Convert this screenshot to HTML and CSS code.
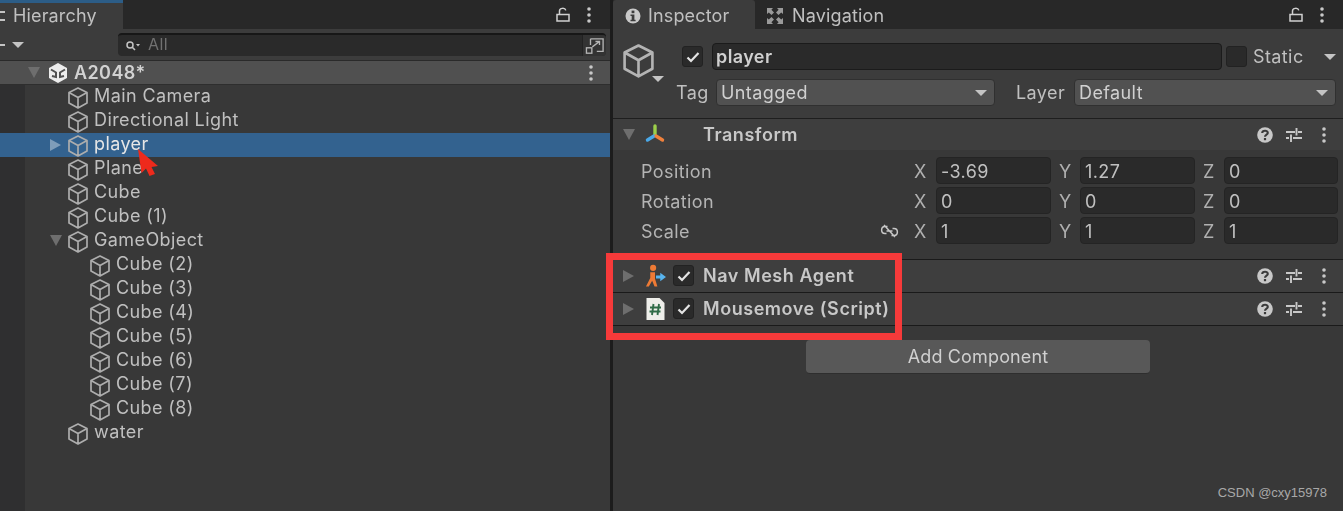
FILE: index.html
```html
<!DOCTYPE html>
<html lang="en">
<head>
  <meta charset="UTF-8" />
  <title>Unity Editor</title>
  <link rel="stylesheet" href="styles.css">
</head>
<body>
  <!-- Shared icons -->
  <svg class="defs" width="0" height="0">
    <symbol id="cube" viewBox="1 1 20 22">
      <path d="M11 2 L20 6.5 V17 L11 22 L2 17 V6.5 Z M2 6.5 L11 11.5 L20 6.5 M11 11.5 V22" fill="none" stroke="currentColor" stroke-width="1.7" stroke-linejoin="round"/>
    </symbol>
    <symbol id="lock" viewBox="0 0 14 15">
      <path d="M1 7.5 H13 V14 H1 Z M3.5 7 V4 C3.5 0.8 9 0.4 9.8 3.4" fill="none" stroke="currentColor" stroke-width="1.5"/>
    </symbol>
    <symbol id="dots" viewBox="0 0 4 16">
      <circle cx="2" cy="2" r="1.8" fill="currentColor"/><circle cx="2" cy="8" r="1.8" fill="currentColor"/><circle cx="2" cy="14" r="1.8" fill="currentColor"/>
    </symbol>
    <symbol id="help" viewBox="0 0 16 16">
      <circle cx="8" cy="8" r="7.8" fill="#c8c8c8"/>
      <path d="M5.2 6 C5.4 3 10.8 3 10.8 6 C10.8 7.8 8 7.6 8 9.8" fill="none" stroke="#3a3a3a" stroke-width="2.1"/><rect x="6.9" y="11" width="2.2" height="2.2" fill="#3a3a3a"/>
    </symbol>
    <symbol id="sliders" viewBox="0 0 16 14">
      <path d="M0 4 H9 M12 4 H16 M10.5 0 V7.5 M0 10 H3 M7 10 H16 M5 6.5 V14" fill="none" stroke="#c8c8c8" stroke-width="1.9"/>
    </symbol>
    <symbol id="check" viewBox="0 0 14 12">
      <path d="M1.5 6.5 L5 10 L12.5 2" fill="none" stroke="#e4e4e4" stroke-width="2.2"/>
    </symbol>
  </svg>

  <!-- Hierarchy -->
  <section class="hierarchy">
    <div class="tabbar">
      <div class="tab tab-hierarchy"><span class="burger"></span>Hierarchy</div>
      <div class="tab-tools">
        <svg class="ico-lock"><use href="#lock"/></svg>
        <svg class="ico-dots"><use href="#dots"/></svg>
      </div>
    </div>
    <div class="h-toolbar">
      <span class="minus"></span>
      <span class="tri-down small"></span>
      <div class="search">
        <svg class="search-ico" viewBox="0 0 14 10"><circle cx="4" cy="4" r="3" fill="none" stroke="#c4c4c4" stroke-width="1.5"/><path d="M6 6 L9 9" stroke="#c4c4c4" stroke-width="1.6"/><path d="M10 3 H14 L12 5.5 Z" fill="#c4c4c4"/></svg>
        <span class="search-text">All</span>
        <span class="search-btn">
          <svg viewBox="0 1 22 20" width="20" height="18"><path d="M6 3 H20 V17 H13 M6 3 V10" fill="none" stroke="#b4b4b4" stroke-width="1.5"/><rect x="1.5" y="13" width="6" height="6" fill="none" stroke="#b4b4b4" stroke-width="1.5"/><path d="M8 12 L16 6 M11.5 6 H16 V10" fill="none" stroke="#b4b4b4" stroke-width="1.5"/></svg>
        </span>
      </div>
    </div>
    <div class="scene-row">
      <span class="tri-down"></span>
      <svg class="unity-ico" viewBox="0 0 18 20">
        <path d="M9 0 L18 5 V15 L9 20 L0 15 V5 Z" fill="#ececec"/>
        <path d="M2 6.5 L7 9.5 V14 L3 13 M16 6.5 L11 9.5 V14 L15 13" fill="none" stroke="#505050" stroke-width="2"/>
      </svg>
      <span class="scene-name">A2048*</span>
      <svg class="ico-dots scene-dots"><use href="#dots"/></svg>
    </div>
    <ul class="tree">
      <li class="node"><svg class="cube"><use href="#cube"/></svg>Main Camera</li>
      <li class="node"><svg class="cube"><use href="#cube"/></svg>Directional Light</li>
      <li class="node selected"><span class="tri-right"></span><svg class="cube"><use href="#cube"/></svg>player</li>
      <li class="node"><svg class="cube"><use href="#cube"/></svg>Plane</li>
      <li class="node"><svg class="cube"><use href="#cube"/></svg>Cube</li>
      <li class="node"><svg class="cube"><use href="#cube"/></svg>Cube (1)</li>
      <li class="node"><span class="tri-down tree-tri"></span><svg class="cube"><use href="#cube"/></svg>GameObject</li>
      <li class="node child"><svg class="cube"><use href="#cube"/></svg>Cube (2)</li>
      <li class="node child"><svg class="cube"><use href="#cube"/></svg>Cube (3)</li>
      <li class="node child"><svg class="cube"><use href="#cube"/></svg>Cube (4)</li>
      <li class="node child"><svg class="cube"><use href="#cube"/></svg>Cube (5)</li>
      <li class="node child"><svg class="cube"><use href="#cube"/></svg>Cube (6)</li>
      <li class="node child"><svg class="cube"><use href="#cube"/></svg>Cube (7)</li>
      <li class="node child"><svg class="cube"><use href="#cube"/></svg>Cube (8)</li>
      <li class="node"><svg class="cube"><use href="#cube"/></svg>water</li>
    </ul>
    <!-- Mouse pointer in the recording -->
    <svg class="pointer" viewBox="0 0 20 27"><path d="M0 0 L20 17 L13.5 18 L17 25 L11.5 27 L8 19.5 L3.5 24 Z" fill="#ee2a1c"/></svg>
  </section>

  <!-- Inspector -->
  <section class="inspector">
    <div class="tabbar">
      <div class="tab tab-inspector">
        <svg class="tab-ico" viewBox="0 0 16 16"><circle cx="8" cy="8" r="7.5" fill="#c8c8c8"/><rect x="6.6" y="2.6" width="2.8" height="2.6" fill="#3c3c3c"/><path d="M5.5 6.6 H9.4 V11.8 H10.6 V13.2 H5.5 V11.8 H6.7 V8 H5.5 Z" fill="#3c3c3c"/></svg>
        Inspector
      </div>
      <div class="tab tab-nav">
        <svg class="tab-ico nav-ico" viewBox="0 0 16 16"><path d="M0 0 H6 L4.4 1.8 L7 4.5 L4.5 7 L1.8 4.4 L0 6 Z M16 0 V6 L14.2 4.4 L11.5 7 L9 4.5 L11.6 1.8 L10 0 Z M0 16 V10 L1.8 11.6 L4.5 9 L7 11.5 L4.4 14.2 L6 16 Z M16 16 H10 L11.6 14.2 L9 11.5 L11.5 9 L14.2 11.6 L16 10 Z" fill="#9a9a9a"/></svg>
        Navigation
      </div>
      <div class="tab-tools">
        <svg class="ico-lock"><use href="#lock"/></svg>
        <svg class="ico-dots"><use href="#dots"/></svg>
      </div>
    </div>

    <div class="object-head">
      <div class="object-icon">
        <svg class="big-cube"><use href="#cube"/></svg>
        <span class="tri-down small"></span>
      </div>
      <div class="object-fields">
        <div class="name-row">
          <span class="checkbox"><svg viewBox="0 0 14 12"><use href="#check"/></svg></span>
          <div class="name-field">player</div>
          <span class="checkbox"></span>
          <span class="static-label">Static</span>
          <span class="tri-down small static-tri"></span>
        </div>
        <div class="tag-row">
          <span class="tag-label">Tag</span>
          <div class="dropdown tag-drop">Untagged<span class="tri-down small"></span></div>
          <span class="layer-label">Layer</span>
          <div class="dropdown layer-drop">Default<span class="tri-down small"></span></div>
        </div>
      </div>
    </div>

    <div class="comp-head comp-transform">
      <span class="tri-down"></span>
      <svg class="comp-ico" viewBox="0 0 20 20">
        <path d="M10 1 V10" stroke="#9ccf4a" stroke-width="3.4" stroke-linecap="round"/>
        <path d="M9 11 L2.5 15" stroke="#4aa8e8" stroke-width="3.4" stroke-linecap="round"/>
        <path d="M11 11 L17.5 15" stroke="#f0813c" stroke-width="3.4" stroke-linecap="round"/>
      </svg>
      <span class="comp-title">Transform</span>
      <div class="comp-tools">
        <svg class="ico-help"><use href="#help"/></svg>
        <svg class="ico-sliders"><use href="#sliders"/></svg>
        <svg class="ico-dots"><use href="#dots"/></svg>
      </div>
    </div>
    <div class="transform-body">
      <div class="vec-row">
        <span class="vec-label">Position</span>
        <span class="axis">X</span><div class="num">-3.69</div>
        <span class="axis">Y</span><div class="num">1.27</div>
        <span class="axis">Z</span><div class="num">0</div>
      </div>
      <div class="vec-row">
        <span class="vec-label">Rotation</span>
        <span class="axis">X</span><div class="num">0</div>
        <span class="axis">Y</span><div class="num">0</div>
        <span class="axis">Z</span><div class="num">0</div>
      </div>
      <div class="vec-row">
        <span class="vec-label">Scale
          <svg class="link-ico" viewBox="0 0 18 14"><path d="M7 2.5 H4.5 C0 2.5 0 9.5 4.5 9.5 H6 M11 11.5 H13.5 C18 11.5 18 4.5 13.5 4.5 H12 M6 7 H12 M3.5 1 L14.5 13" fill="none" stroke="#c8c8c8" stroke-width="1.5"/></svg>
        </span>
        <span class="axis">X</span><div class="num">1</div>
        <span class="axis">Y</span><div class="num">1</div>
        <span class="axis">Z</span><div class="num">1</div>
      </div>
    </div>

    <div class="comp-head comp-collapsed">
      <span class="tri-right"></span>
      <svg class="comp-ico" viewBox="0 0 22 24">
        <circle cx="8.5" cy="3.5" r="3.2" fill="#ee7a35"/>
        <path d="M5.5 8 L10.5 8 L10.5 15 L13 23 H10 L7.5 17 L4 23 H1 L5.5 14 Z" fill="#ee7a35"/>
        <path d="M11.5 11.5 H16 V8.5 L22 13 L16 17.5 V14.5 H11.5 Z" fill="#58b4ee"/>
      </svg>
      <span class="checkbox"><svg viewBox="0 0 14 12"><use href="#check"/></svg></span>
      <span class="comp-title">Nav Mesh Agent</span>
      <div class="comp-tools">
        <svg class="ico-help"><use href="#help"/></svg>
        <svg class="ico-sliders"><use href="#sliders"/></svg>
        <svg class="ico-dots"><use href="#dots"/></svg>
      </div>
    </div>
    <div class="comp-head comp-collapsed">
      <span class="tri-right"></span>
      <svg class="comp-ico" viewBox="0 0 20 24">
        <path d="M1 1 H14 L19 6 V23 H1 Z" fill="#eeeeea"/>
        <path d="M8 7 L6.5 18 M13.5 7 L12 18 M4.5 10.5 H15.5 M4 14.5 H15" stroke="#2f6b47" stroke-width="1.9"/>
      </svg>
      <span class="checkbox"><svg viewBox="0 0 14 12"><use href="#check"/></svg></span>
      <span class="comp-title">Mousemove (Script)</span>
      <div class="comp-tools">
        <svg class="ico-help"><use href="#help"/></svg>
        <svg class="ico-sliders"><use href="#sliders"/></svg>
        <svg class="ico-dots"><use href="#dots"/></svg>
      </div>
    </div>

    <div class="add-wrap">
      <div class="add-btn">Add Component</div>
    </div>
  </section>

  <!-- Annotation and watermark on top of the screenshot -->
  <div class="red-box"></div>
  <div class="watermark">CSDN @cxy15978</div>
</body>
</html>
```

FILE: styles.css
```css
* {
  box-sizing: border-box;
}

body {
  margin: 0;
  width: 1343px;
  height: 511px;
  overflow: hidden;
  display: flex;
  position: relative;
  background-color: #1c1c1c;
  font-family: 'Inter', sans-serif;
  font-size: 18px;
  letter-spacing: 0.4px;
  color: #c0c0c0;
}

.defs {
  position: absolute;
}

/* Panels */
.hierarchy {
  position: relative;
  width: 610px;
  height: 511px;
  background: linear-gradient(to right, #2f2f30 25px, #383838 25px);
  filter: blur(0.4px);
}

.inspector {
  width: 730px;
  height: 511px;
  margin-left: 3px;
  background-color: #383838;
  filter: blur(0.4px);
}

/* Tab bars */
.tabbar {
  height: 29px;
  display: flex;
  background-color: #282828;
}

.tab {
  display: flex;
  align-items: center;
  height: 29px;
  white-space: nowrap;
  letter-spacing: 0.15px;
}

.tab-hierarchy {
  width: 123px;
  padding-left: 13px;
  padding-bottom: 1px;
  background-color: #3c3c3c;
  border-top: 3px solid #2c5d87;
  position: relative;
}

.burger {
  position: absolute;
  left: 0;
  top: 8px;
  width: 5px;
  height: 10px;
  border-top: 2px solid #c4c4c4;
  border-bottom: 2px solid #c4c4c4;
}

.tab-inspector {
  width: 142px;
  padding-left: 12px;
  padding-top: 2px;
  gap: 7px;
  background-color: #3c3c3c;
  border-radius: 3px 3px 0 0;
}

.tab-nav {
  padding-left: 12px;
  padding-top: 2px;
  gap: 9px;
}

.tab-ico {
  width: 16px;
  height: 16px;
  flex: none;
}

.tab-tools {
  margin-left: auto;
  display: flex;
  align-items: center;
  gap: 17px;
  padding-right: 19px;
}

.ico-lock {
  width: 14px;
  height: 15px;
  color: #d0d0d0;
  margin-bottom: 1px;
}

.ico-dots {
  width: 4px;
  height: 16px;
  color: #c8c8c8;
}

/* Triangles */
.tri-down,
.tri-right {
  display: inline-block;
  width: 0;
  height: 0;
  flex: none;
}

.tri-down {
  border-left: 6px solid transparent;
  border-right: 6px solid transparent;
  border-top: 11px solid #6e6e6e;
}

.tri-down.small {
  border-left-width: 6px;
  border-right-width: 6px;
  border-top: 6px solid #c4c4c4;
}

.tri-right {
  border-top: 6px solid transparent;
  border-bottom: 6px solid transparent;
  border-left: 11px solid #6e6e6e;
}

/* Hierarchy toolbar */
.h-toolbar {
  height: 32px;
  display: flex;
  align-items: center;
  background-color: #3c3c3c;
  border-bottom: 1px solid #2a2a2a;
  padding-left: 0;
}

.minus {
  width: 5px;
  height: 2px;
  margin-right: 7px;
  background-color: #c4c4c4;
}

.search {
  width: 488px;
  height: 23px;
  margin-left: 94px;
  display: flex;
  align-items: center;
  background-color: #2a2a2a;
  border-top: 2px solid #171717;
  border-radius: 4px;
  padding-left: 8px;
}

.search-ico {
  width: 14px;
  height: 10px;
}

.search-text {
  margin-left: 8px;
  margin-bottom: 4px;
  font-size: 16px;
  color: #717171;
}

.search-btn {
  margin-left: auto;
  width: 24px;
  height: 21px;
  display: flex;
  align-items: center;
  justify-content: center;
  background-color: #333333;
  border-left: 1px solid #222222;
  border-radius: 0 4px 4px 0;
}

/* Scene header */
.scene-row {
  height: 24px;
  display: flex;
  align-items: center;
  padding-left: 28px;
  padding-right: 17px;
  background-color: #505050;
  border-bottom: 1px solid #2e2e2e;
  font-weight: 600;
  color: #d2d2d2;
}

.unity-ico {
  width: 18px;
  height: 20px;
  margin-left: 9px;
}

.scene-name {
  margin-left: 7px;
}

.scene-dots {
  margin-left: auto;
}

/* Tree */
.tree {
  list-style: none;
  margin: 0;
  padding: 0;
}

.node {
  position: relative;
  height: 24px;
  display: flex;
  align-items: center;
  padding-left: 68px;
  padding-bottom: 3px;
  white-space: nowrap;
}

.node.child {
  padding-left: 90px;
}

.node.selected {
  background-color: #33628f;
  color: #e6e6e6;
}

.node .tri-right,
.tree-tri {
  position: absolute;
  left: 50px;
  top: 6px;
}

.node.selected .tri-right {
  border-left-color: #7f9db9;
}

.cube {
  width: 20px;
  height: 22px;
  margin-right: 6px;
  margin-top: 5px;
  color: #adadad;
  flex: none;
}

.pointer {
  position: absolute;
  left: 138px;
  top: 149px;
  width: 20px;
  height: 27px;
}

/* Inspector header */
.object-head {
  height: 90px;
  display: flex;
  background-color: #3c3c3c;
  border-bottom: 1px solid #1e1e1e;
}

.object-icon {
  position: relative;
  width: 69px;
  flex: none;
}

.big-cube {
  position: absolute;
  left: 10px;
  top: 15px;
  width: 31px;
  height: 34px;
  color: #b4b4b4;
}

.object-icon .tri-down {
  position: absolute;
  left: 39px;
  top: 47px;
}

.object-fields {
  flex: 1;
}

.name-row {
  display: flex;
  align-items: center;
  height: 27px;
  margin-top: 14px;
}

.checkbox {
  width: 21px;
  height: 21px;
  flex: none;
  display: flex;
  align-items: center;
  justify-content: center;
  background-color: #2a2a2a;
  border: 1px solid #222222;
  border-radius: 3px;
}

.checkbox svg {
  width: 14px;
  height: 12px;
}

.name-field {
  width: 510px;
  height: 27px;
  margin-left: 9px;
  margin-right: 4px;
  padding-left: 3px;
  line-height: 26px;
  font-weight: 600;
  color: #d0d0d0;
  background-color: #2a2a2a;
  border: 1px solid #1b1b1b;
  border-radius: 4px;
}

.static-label {
  margin-left: 6px;
}

.static-tri {
  margin-left: 20px;
}

.tag-row {
  display: flex;
  align-items: center;
  height: 27px;
  margin-top: 9px;
}

.tag-label {
  width: 40px;
  margin-left: -6px;
  flex: none;
}

.layer-label {
  margin-left: 21px;
  width: 58px;
  flex: none;
}

.dropdown {
  height: 27px;
  display: flex;
  align-items: center;
  justify-content: space-between;
  padding: 0 7px 0 4px;
  color: #d0d0d0;
  background-color: #515151;
  border: 1px solid #303030;
  border-radius: 4px;
}

.tag-drop {
  width: 279px;
}

.layer-drop {
  width: 262px;
}

/* Components */
.comp-head {
  position: relative;
  display: flex;
  align-items: center;
  background-color: #3e3e3e;
  font-weight: 600;
  letter-spacing: 0.55px;
  color: #c8c8c8;
}

.comp-transform {
  height: 31px;
}

.comp-collapsed {
  height: 34px;
  border-top: 1px solid #1a1a1a;
  border-bottom: 1px solid #1a1a1a;
  margin-bottom: -1px;
}

.comp-head > .tri-down,
.comp-head > .tri-right {
  margin-left: 10px;
}

.comp-head > .comp-ico {
  position: absolute;
  left: 32px;
  top: 5px;
  width: 20px;
  height: 22px;
}

.comp-collapsed > .comp-ico {
  top: 4px;
  width: 21px;
  height: 24px;
}

.comp-collapsed > .checkbox {
  position: absolute;
  left: 60px;
  top: 5px;
}

.comp-title {
  position: absolute;
  left: 90px;
}

.comp-collapsed > .comp-title {
  margin-bottom: 2px;
}

.comp-tools {
  margin-left: auto;
  display: flex;
  align-items: center;
  padding-right: 17px;
}

.ico-help {
  width: 16px;
  height: 16px;
}

.ico-sliders {
  width: 16px;
  height: 14px;
  margin-left: 13px;
}

.comp-tools .ico-dots {
  margin-left: 20px;
}

.transform-body {
  height: 109px;
  padding-top: 7px;
  background-color: #383838;
}

.vec-row {
  height: 30px;
  display: flex;
  align-items: flex-start;
}

.vec-label {
  position: relative;
  width: 301px;
  padding-left: 28px;
  padding-top: 1px;
  line-height: 27px;
  flex: none;
  color: #b4b4b4;
}

.link-ico {
  position: absolute;
  left: 267px;
  top: 7px;
  width: 19px;
  height: 14px;
}

.axis {
  width: 21px;
  padding-top: 1px;
  line-height: 27px;
  flex: none;
  color: #b0b0b0;
}

.vec-label + .axis {
  width: 22px;
}

.num {
  width: 115px;
  height: 27px;
  flex: none;
  margin-right: 8px;
  padding-left: 4px;
  line-height: 27px;
  background-color: #2a2a2a;
  border: 1px solid #242424;
  border-radius: 4px;
}

.num:last-child {
  width: 114px;
  margin-right: 0;
}

.add-wrap {
  display: flex;
  padding-top: 15px;
  padding-left: 193px;
}

.add-btn {
  width: 344px;
  height: 34px;
  display: flex;
  align-items: center;
  justify-content: center;
  letter-spacing: 0.15px;
  color: #d0d0d0;
  background-color: #585858;
  border-bottom: 1px solid #2e2e2e;
  border-radius: 4px;
}

/* Overlays */
.red-box {
  position: absolute;
  left: 606px;
  top: 253px;
  width: 296px;
  height: 87px;
  border: 7px solid #f63a3a;
}

.watermark {
  position: absolute;
  right: 16px;
  top: 485px;
  font-family: 'Liberation Sans', sans-serif;
  font-size: 13px;
  letter-spacing: 0;
  color: #a8a8a8;
}
```
